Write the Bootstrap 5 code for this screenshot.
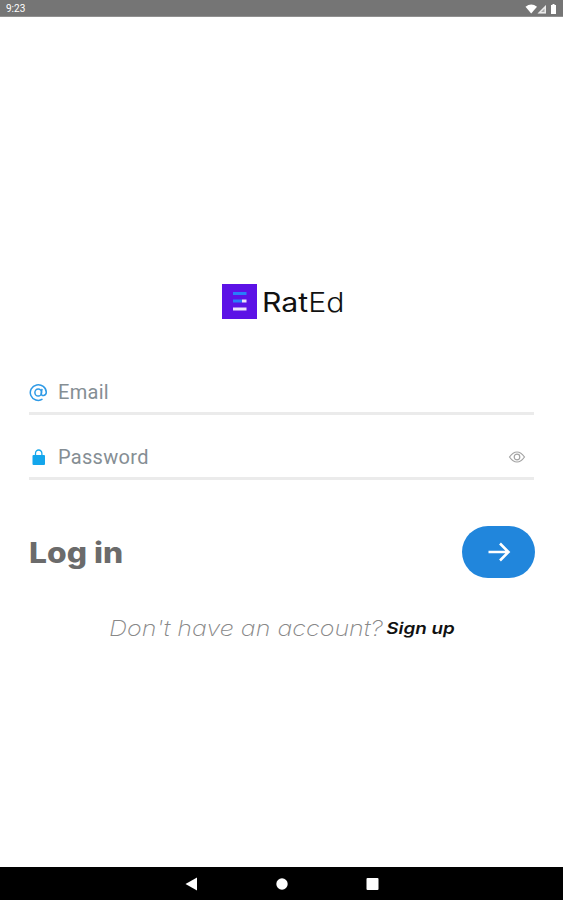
<!DOCTYPE html>
<html lang="en">
<head>
<meta charset="utf-8">
<meta name="viewport" content="width=device-width, initial-scale=1">
<title>RatEd – Log in</title>
<link href="https://cdn.jsdelivr.net/npm/bootstrap@5.3.0/dist/css/bootstrap.min.css" rel="stylesheet">
<style>
body{font-family:Roboto,sans-serif;background:#fff}
svg{display:block;flex:none}
.status-bar{height:17px;background:#757575;border-bottom:1px solid #909090;font-size:10px;line-height:18px;padding:1px 4px 0 6px}
.brand-row{margin-top:267px;height:36px;padding-left:222px}
.brand-name{font:400 26.500px/36px Inter,sans-serif;color:#111;margin-left:5px;transform:scaleX(1.14);transform-origin:left}
.brand-name span{font-weight:300}
.login-form{padding:0 29px}
.field{height:65px;border-bottom:3px solid #ebebeb;padding:22px 8px 0 0}
.field.first{margin-top:30px}
.field .form-control{font-size:20px;line-height:24px;height:40px;color:#7d868c;margin-left:10px;letter-spacing:.3px}
.field .form-control::placeholder{color:#858e94;opacity:1}
.login-row{margin-top:46px;height:52px}
.login-row h1{font:800 28px/55px Inter,sans-serif;color:#6b6b6b;transform:scaleX(1.135);transform-origin:left}
.go{width:73px;height:52px;background:#2186dc;margin-right:-1px}
.signup-row{width:max-content;margin:34px 0 0 109px;height:32px;font-family:Inter,sans-serif;font-style:italic;line-height:32px;transform:scaleX(1.14);transform-origin:left;font-feature-settings:"cv11"}
.ask{font-size:22px;font-weight:200;color:#888}
.signup{font-size:16.500px;font-weight:600;color:#111;margin-left:3px}
.nav-keys{height:33px;background:#000}
</style>
<script src="https://cdn.jsdelivr.net/npm/bootstrap@5.3.0/dist/js/bootstrap.bundle.min.js"></script>
</head>
<body class="vh-100 overflow-hidden d-flex flex-column">
<header class="status-bar d-flex justify-content-between align-items-center text-white">
  <span>9:23</span>
  <svg width="34" height="12" viewBox="0 0 34 12" fill="#fff"><path d="M.5 3.700Q6.200-.7 12 3.700L6.200 10.500z"/><path d="M21 2v8.500h-8.500z" fill="#aaa"/><path d="M21 2v8.500h-8.500zM19.500 5.500L16 9h3.500z" fill-rule="evenodd" opacity=".75"/><path d="M27.500 1h2v1H31v9h-5V2h1.500z"/></svg>
</header>
<main class="flex-grow-1">
  <div class="brand-row d-flex">
    <svg width="35" height="35" viewBox="0 0 35 35"><path fill="#5c12e6" d="M0 0h35v35H0z"/><path d="M11 9.500h13.500M11 17h9" stroke="#287dfa" stroke-width="3"/><path d="M20 17h4.500M11 25h13.500" stroke="#ece2fa" stroke-width="3"/></svg>
    <div class="brand-name">Rat<span>Ed</span></div>
  </div>
  <form class="login-form">
    <div class="field first d-flex align-items-center">
      <svg width="19" height="19" viewBox="0 0 19 19" fill="none" stroke="#2e9ae6" stroke-width="1.500"><path d="M13.500 16.200A8 7.800 0 1 1 17.300 9.300C17.300 12.700 12.300 14 12.300 10.500L13 5.800"/><ellipse cx="9.200" cy="9.500" rx="3.300" ry="3.600"/></svg>
      <input class="form-control border-0 shadow-none bg-transparent p-0" type="email" placeholder="Email" aria-label="Email">
    </div>
    <div class="field d-flex align-items-center">
      <svg width="19" height="19" viewBox="0 0 19 19"><path d="M6.500 8V5.500a3.200 3.500 0 0 1 6.400 0V8" fill="none" stroke="#19a8eb" stroke-width="1.300"/><rect x="3.500" y="7" width="12.500" height="10" rx="1" fill="#13a6ec"/></svg>
      <input class="form-control border-0 shadow-none bg-transparent p-0" type="password" placeholder="Password" aria-label="Password">
      <svg width="18" height="14" viewBox="0 0 18 14" fill="none" stroke="#a3a3a3" stroke-width="1.200"><path d="M1.500 7Q5 2 9 2t7.500 5Q13 12 9 12T1.500 7z"/><circle cx="9" cy="7" r="2.800"/></svg>
    </div>
    <div class="login-row d-flex justify-content-between">
      <h1 class="m-0">Log in</h1>
      <button class="go btn p-0 border-0 rounded-pill d-flex align-items-center justify-content-center" type="button" aria-label="Log in">
        <svg width="24" height="20" viewBox="0 0 24 20" fill="none" stroke="#fff" stroke-width="2.600"><path d="M1.500 10h20M13 1.500l8.500 8.500-8.500 8.500"/></svg>
      </button>
    </div>
  </form>
  <div class="signup-row d-flex text-nowrap"><span class="ask">Don't have an account?</span><a class="signup text-decoration-none" href="#">Sign up</a></div>
</main>
<footer class="nav-keys d-flex justify-content-center align-items-center">
  <svg width="194" height="14" viewBox="0 0 194 14" fill="#fff"><path d="M.5 7L12 .5v13z"/><circle cx="97" cy="7" r="5.700"/><rect x="181.500" y="1" width="12" height="12" rx="1"/></svg>
</footer>
</body>
</html>
